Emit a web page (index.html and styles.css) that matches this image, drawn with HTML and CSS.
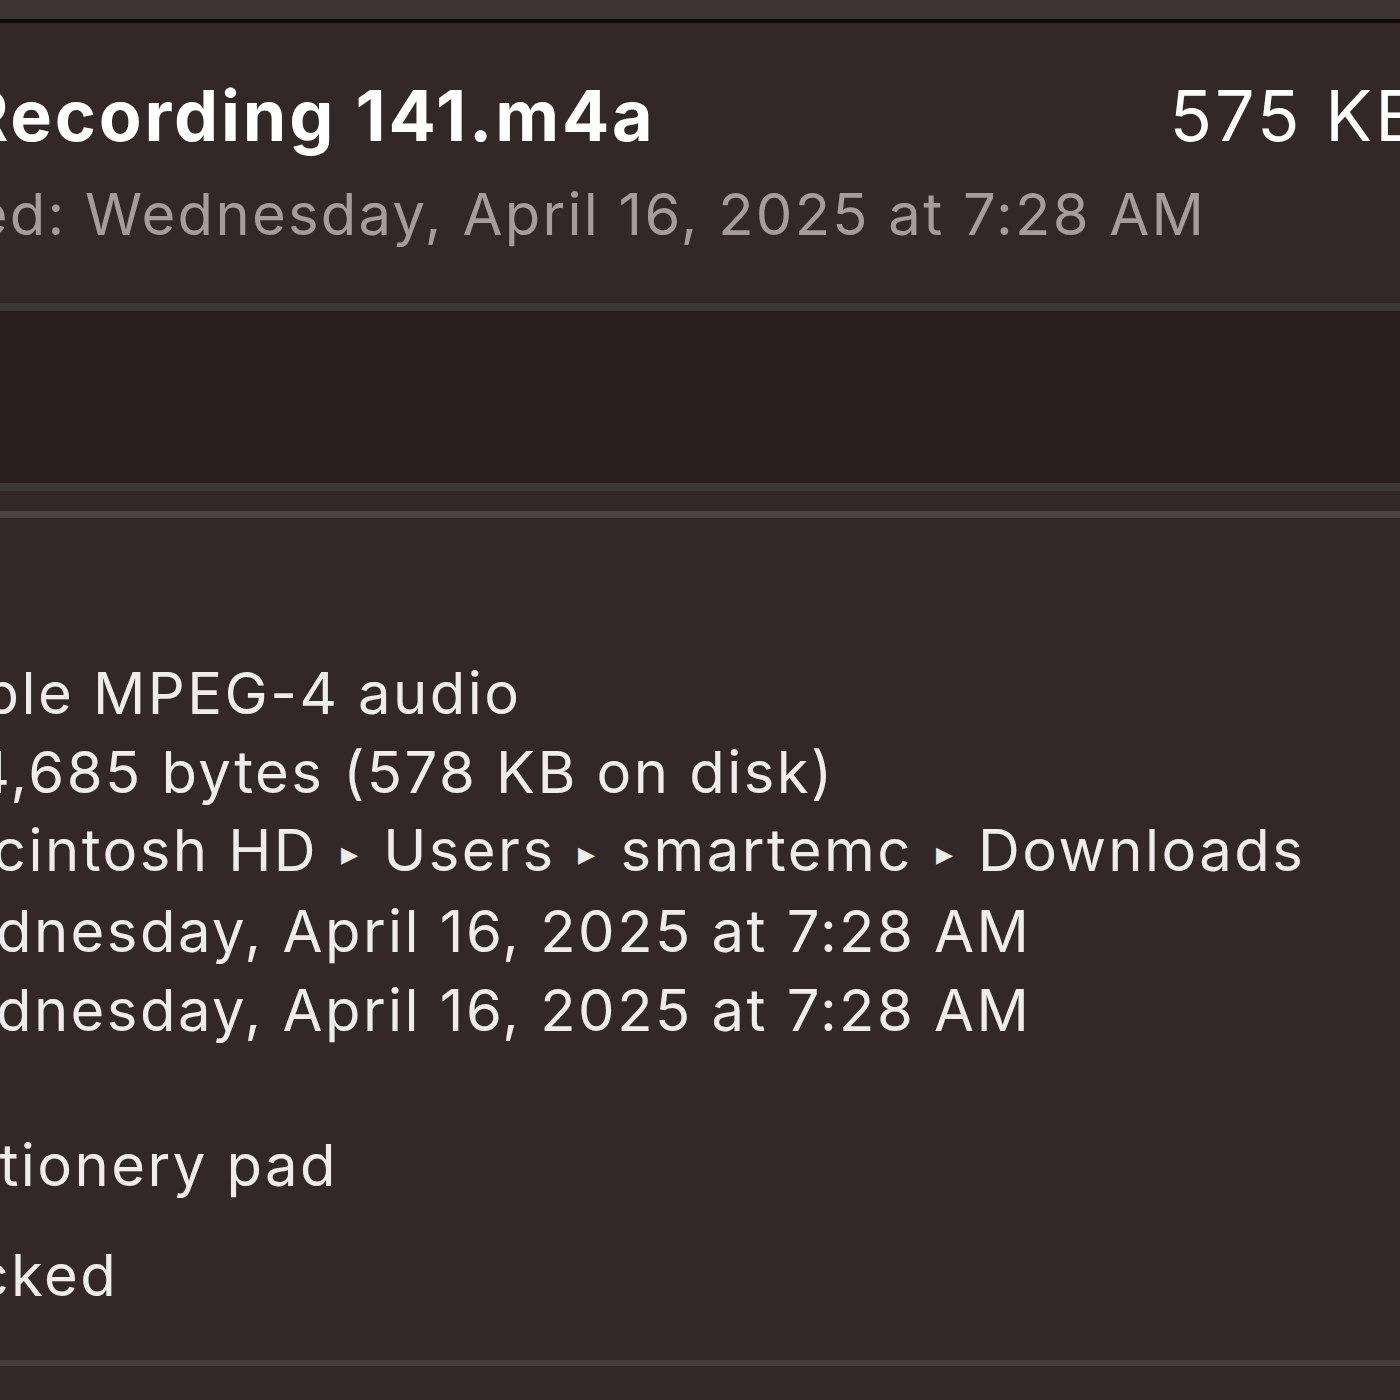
FILE: index.html
```html
<!DOCTYPE html>
<html lang="en">
<head>
<meta charset="utf-8">
<title>Recording 141.m4a Info</title>
<link rel="stylesheet" href="styles.css">
</head>
<body>
<div class="screen">
  <div class="titlebar"></div>
  <div class="window">
    <header class="summary">
      <div class="file-icon"></div>
      <div class="summary-text">
        <div class="name-row">
          <span class="name">New Recording 141.m4a</span>
          <span class="size">575 KB</span>
        </div>
        <div class="modified">Modified: Wednesday, April 16, 2025 at 7:28 AM</div>
      </div>
    </header>
    <div class="tags-field"></div>
    <div class="spacer"></div>
    <section class="general">
      <div class="info-grid">
        <div class="label">Kind:</div><div class="value">Apple MPEG-4 audio</div>
        <div class="label">Size:</div><div class="value">574,685 bytes (578 KB on disk)</div>
        <div class="label">Where:</div><div class="value">Macintosh HD <span class="crumb">▸</span> Users <span class="crumb">▸</span> smartemc <span class="crumb">▸</span> Downloads</div>
        <div class="label">Created:</div><div class="value">Wednesday, April 16, 2025 at 7:28 AM</div>
        <div class="label">Modified:</div><div class="value">Wednesday, April 16, 2025 at 7:28 AM</div>
        <div class="label"></div>
        <div class="value checks">
          <label class="check"><span class="box"></span>Stationery pad</label>
          <label class="check"><span class="box"></span>Locked</label>
        </div>
      </div>
    </section>
    <div class="bottom"></div>
  </div>
</div>
</body>
</html>
```
FILE: styles.css
```css
html, body {
  margin: 0;
  padding: 0;
  background: #322827;
  overflow: hidden;
}

body {
  font-family: "Inter", "Liberation Sans", sans-serif;
  width: 1400px;
  height: 1400px;
}

.screen {
  width: 1400px;
  height: 1400px;
  overflow: hidden;
}

.titlebar {
  height: 19px;
  background: #3c3534;
  border-bottom: 4px solid #100d0d;
}

.window {
  margin-left: -600px;
  width: 2024px;
}

.summary {
  display: flex;
  gap: 30px;
  padding: 53px 0 50px 0;
}

.file-icon {
  width: 351px;
  flex: none;
}

.summary-text {
  flex: 1;
  display: flex;
  flex-direction: column;
  gap: 19px;
}

.name-row {
  display: flex;
  justify-content: space-between;
  align-items: baseline;
  line-height: 80px;
}

.name {
  font-size: 70px;
  font-weight: 700;
  letter-spacing: 2.8px;
  color: #ffffff;
}

.size {
  font-size: 70px;
  font-weight: 400;
  letter-spacing: 3px;
  color: #ffffff;
}

.modified {
  font-size: 58px;
  line-height: 78px;
  letter-spacing: 2.25px;
  padding-left: 7px;
  color: #a49d9c;
}

.tags-field {
  height: 172px;
  background: #291f1e;
  border-top: 8px solid #3a3934;
  border-bottom: 8px solid #3a3934;
}

.spacer {
  height: 20px;
  border-bottom: 7px solid #4b4342;
}

.general {
  padding: 136px 0 46px 0;
  border-bottom: 6px solid #463d3c;
}

.info-grid {
  display: grid;
  grid-template-columns: 488px 1fr;
  column-gap: 15px;
  font-size: 58px;
  line-height: 78.5px;
  letter-spacing: 2.45px;
  color: #efecec;
}

.label {
  text-align: right;
}

.crumb {
  font-size: 34px;
  vertical-align: 0.18em;
  margin: 0 4px;
}

.checks {
  display: flex;
  flex-direction: column;
  gap: 32px;
  padding-top: 77px;
}

.check {
  display: flex;
  align-items: center;
  line-height: 78px;
  margin-left: -60px;
}

.box {
  width: 40px;
  height: 40px;
  border-radius: 8px;
  background: #5a5150;
  margin-right: 20px;
  flex: none;
}

.bottom {
  height: 40px;
}
```
